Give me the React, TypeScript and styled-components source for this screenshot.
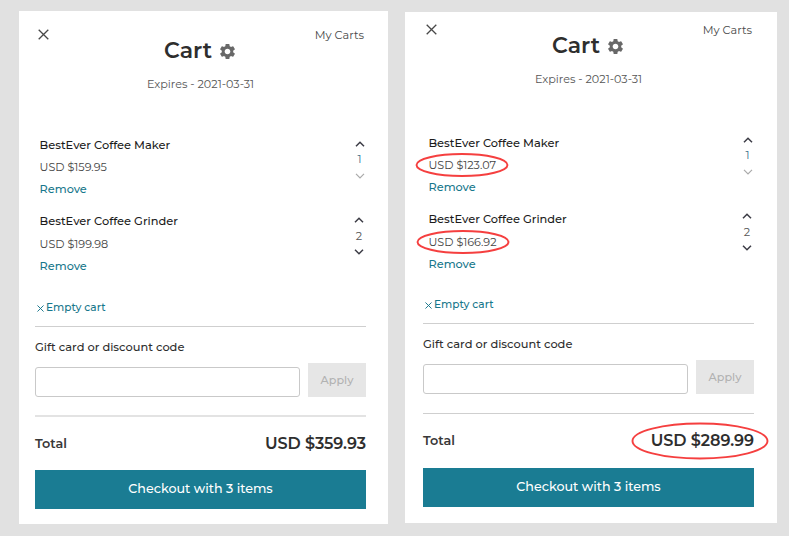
import React from "react";
import styled, { createGlobalStyle } from "styled-components";
import { MdSettings } from "react-icons/md";

const GlobalStyle = createGlobalStyle`
  *, *::before, *::after { box-sizing: border-box; }
  body {
    margin: 0;
    background: #e1e1e1;
    color: #2e2e2e;
    font-family: Montserrat, Inter, "Open Sans", sans-serif;
  }
  button, input { font-family: inherit; }
`;

const Page = styled.main`
  display: flex;
  align-items: flex-start;
  gap: 17px;
  width: 789px;
  height: 536px;
  padding: 11px 12px 0 19px;
  overflow: hidden;
`;

const Card = styled.section<{ $second?: boolean }>`
  flex: none;
  width: ${(p) => (p.$second ? 372 : 369)}px;
  height: ${(p) => (p.$second ? 511 : 513)}px;
  margin-top: ${(p) => (p.$second ? 1 : 0)}px;
  padding: ${(p) => (p.$second ? "9px 23px 0 18px" : "15px 22px 0 16px")};
  background: #fff;
`;

const TopBar = styled.div`
  display: flex;
  align-items: center;
  justify-content: space-between;
  height: 16px;
  padding: 0 2px 0 3px;
`;

const CloseIcon = styled.svg`
  display: block;
  width: 11px;
  height: 11px;
  stroke: #484848;
  stroke-width: 1.3;
  fill: none;
`;

const MyCarts = styled.a`
  padding-top: 2px;
  font-size: 11.3px;
  line-height: 16px;
  color: #4a4a4a;
`;

const Title = styled.h1`
  display: flex;
  align-items: center;
  justify-content: center;
  gap: 6px;
  height: 16px;
  margin: 1px 0 0;
  font-size: 22px;
  font-weight: 600;
  line-height: 16px;

  svg { width: 19px; height: 19px; fill: #686868; }
`;

const Expires = styled.p`
  margin: 17px 0 0;
  font-size: 11.2px;
  line-height: 16px;
  text-align: center;
  color: #555;
`;

const Items = styled.div<{ $second?: boolean }>`
  display: flex;
  flex-direction: column;
  gap: 10px;
  height: 143px;
  margin-top: ${(p) => (p.$second ? 45 : 42)}px;
  padding-left: ${(p) => (p.$second ? 5.5 : 4.6)}px;
`;

const Item = styled.article`
  display: flex;
  justify-content: space-between;
`;

const Details = styled.div<{ $priceHeight: number }>`
  display: grid;
  grid-template-rows: 22px ${(p) => p.$priceHeight}px 22px;
  align-items: center;
  justify-items: start;
`;

const ItemName = styled.h2`
  margin: 0;
  font-size: 11.4px;
  font-weight: 500;
  color: #1c1c1c;
`;

const Price = styled.span`
  position: relative;
  font-size: 11.2px;
  color: #444;
`;

const Highlight = styled.svg<{ $w: number; $h: number; $dx: number; $dy: number }>`
  position: absolute;
  top: 50%;
  left: 50%;
  width: ${(p) => p.$w}px;
  height: ${(p) => p.$h}px;
  transform: translate(calc(-50% + ${(p) => p.$dx}px), calc(-50% + ${(p) => p.$dy}px));
  overflow: visible;
  fill: none;
  stroke: #f53f3f;
  stroke-width: 1.9;
`;

const LinkButton = styled.button`
  padding: 0;
  border: 0;
  background: none;
  font-size: 11.3px;
  font-weight: 500;
  color: #17778c;
`;

const Stepper = styled.div<{ $top: number; $right: number }>`
  display: grid;
  grid-template-rows: 10px 20px 13px;
  place-items: center;
  width: 13px;
  height: 43px;
  margin-top: ${(p) => p.$top}px;
  margin-right: ${(p) => p.$right}px;
`;

const Quantity = styled.span<{ $accent?: boolean }>`
  padding: ${(p) => (p.$accent ? "0" : "2px 0 0 1px")};
  font-size: 11.2px;
  color: ${(p) => (p.$accent ? "#3d6f88" : "#555")};
`;

const Arrow = styled.svg<{ $muted?: boolean }>`
  width: 10px;
  height: 6px;
  fill: none;
  stroke: ${(p) => (p.$muted ? "#aaa" : "#3c3c46")};
  stroke-width: ${(p) => (p.$muted ? 1.2 : 1.5)};
`;

const EmptyCart = styled.button<{ $second?: boolean }>`
  display: flex;
  align-items: center;
  gap: 2px;
  height: 20px;
  margin: ${(p) => (p.$second ? 19 : 20)}px 0 0 2px;
  padding: 0;
  border: 0;
  background: none;
  font-size: 10.6px;
  font-weight: 500;
  color: #17778c;

  svg { margin-top: 3px; width: 7px; height: 7px; stroke: #17778c; stroke-width: 1.5; }
`;

const Rule = styled.hr<{ $top: number; $soft?: boolean }>`
  height: ${(p) => (p.$soft ? 2 : 1)}px;
  margin: ${(p) => p.$top}px 0 0;
  border: 0;
  background: ${(p) => (p.$soft ? "#e3e3e3" : "#cfcfcf")};
`;

const CodeLabel = styled.label`
  display: block;
  margin-top: 10px;
  font-size: 11.4px;
  font-weight: 500;
  line-height: 20px;
`;

const Coupon = styled.div`
  display: flex;
  align-items: flex-end;
  gap: 8px;
  height: 34px;
  margin-top: 6px;
`;

const CodeInput = styled.input`
  flex: 1;
  min-width: 0;
  height: 30px;
  padding: 0 8px;
  border: 1px solid #c9c9c9;
  border-radius: 3px;
  background: #fff;
`;

const ApplyButton = styled.button`
  width: 58px;
  height: 34px;
  padding: 0;
  border: 0;
  background: #e6e6e6;
  font-size: 11.2px;
  font-weight: 500;
  color: #b2b2b2;
`;

const TotalRow = styled.div`
  display: flex;
  align-items: center;
  justify-content: space-between;
  height: 20px;
  margin-top: 16px;
`;

const TotalLabel = styled.span`
  font-size: 12.8px;
  font-weight: 600;
  color: #383838;
`;

const TotalPrice = styled.strong`
  position: relative;
  font-size: 16px;
  font-weight: 600;
  letter-spacing: -0.06px;
`;

const Checkout = styled.button<{ $top: number }>`
  display: block;
  width: 100%;
  height: 39px;
  margin-top: ${(p) => p.$top}px;
  padding: 0 0 2px;
  border: 0;
  background: #1a7c93;
  font-size: 12.7px;
  font-weight: 500;
  color: #fff;
`;

function Cross() {
  return <path d="M0.7 0.7 10.3 10.3M10.3 0.7 0.7 10.3" />;
}

function Ring({ w, h, dx = 0, dy = 0 }: { w: number; h: number; dx?: number; dy?: number }) {
  return (
    <Highlight $w={w} $h={h} $dx={dx} $dy={dy} viewBox={`0 0 ${w} ${h}`}>
      <ellipse cx={w / 2} cy={h / 2} rx={w / 2 - 1} ry={h / 2 - 1} />
    </Highlight>
  );
}

type CartItem = { name: string; price: string; quantity: number };

function CartPanel({ items, total, second = false }: { items: CartItem[]; total: string; second?: boolean }) {
  return (
    <Card $second={second}>
      <TopBar>
        <CloseIcon viewBox="0 0 11 11"><Cross /></CloseIcon>
        <MyCarts>My Carts</MyCarts>
      </TopBar>
      <Title>Cart<MdSettings /></Title>
      <Expires>Expires - 2021-03-31</Expires>
      <Items $second={second}>
        {items.map((item, i) => (
          <Item key={item.name}>
            <Details $priceHeight={i === 0 ? 22 : 23}>
              <ItemName>{item.name}</ItemName>
              <Price>
                {item.price}
                {second && <Ring w={93} h={24} />}
              </Price>
              <LinkButton>Remove</LinkButton>
            </Details>
            <Stepper $top={second ? 3 : 5} $right={i === 0 ? 0 : 1}>
              <Arrow viewBox="0 0 10 6"><path d="M1 5.2 5 1.2 9 5.2" /></Arrow>
              <Quantity $accent={i === 0}>{item.quantity}</Quantity>
              <Arrow viewBox="0 0 10 6" $muted={i === 0}><path d="M1 .8 5 4.8 9 .8" /></Arrow>
            </Stepper>
          </Item>
        ))}
      </Items>
      <EmptyCart $second={second}>
        <svg viewBox="0 0 11 11"><Cross /></svg>
        Empty cart
      </EmptyCart>
      <Rule $top={9} />
      <CodeLabel>Gift card or discount code</CodeLabel>
      <Coupon>
        <CodeInput aria-label="Gift card or discount code" />
        <ApplyButton>Apply</ApplyButton>
      </Coupon>
      <Rule $top={second ? 19 : 18} $soft={!second} />
      <TotalRow>
        <TotalLabel>Total</TotalLabel>
        <TotalPrice>
          {total}
          {second && <Ring w={137} h={37} dx={-2} dy={1} />}
        </TotalPrice>
      </TotalRow>
      <Checkout $top={second ? 18 : 17}>Checkout with 3 items</Checkout>
    </Card>
  );
}

export default function App() {
  return (
    <Page>
      <GlobalStyle />
      <CartPanel
        items={[
          { name: "BestEver Coffee Maker", price: "USD $159.95", quantity: 1 },
          { name: "BestEver Coffee Grinder", price: "USD $199.98", quantity: 2 },
        ]}
        total="USD $359.93"
      />
      <CartPanel
        second
        items={[
          { name: "BestEver Coffee Maker", price: "USD $123.07", quantity: 1 },
          { name: "BestEver Coffee Grinder", price: "USD $166.92", quantity: 2 },
        ]}
        total="USD $289.99"
      />
    </Page>
  );
}
